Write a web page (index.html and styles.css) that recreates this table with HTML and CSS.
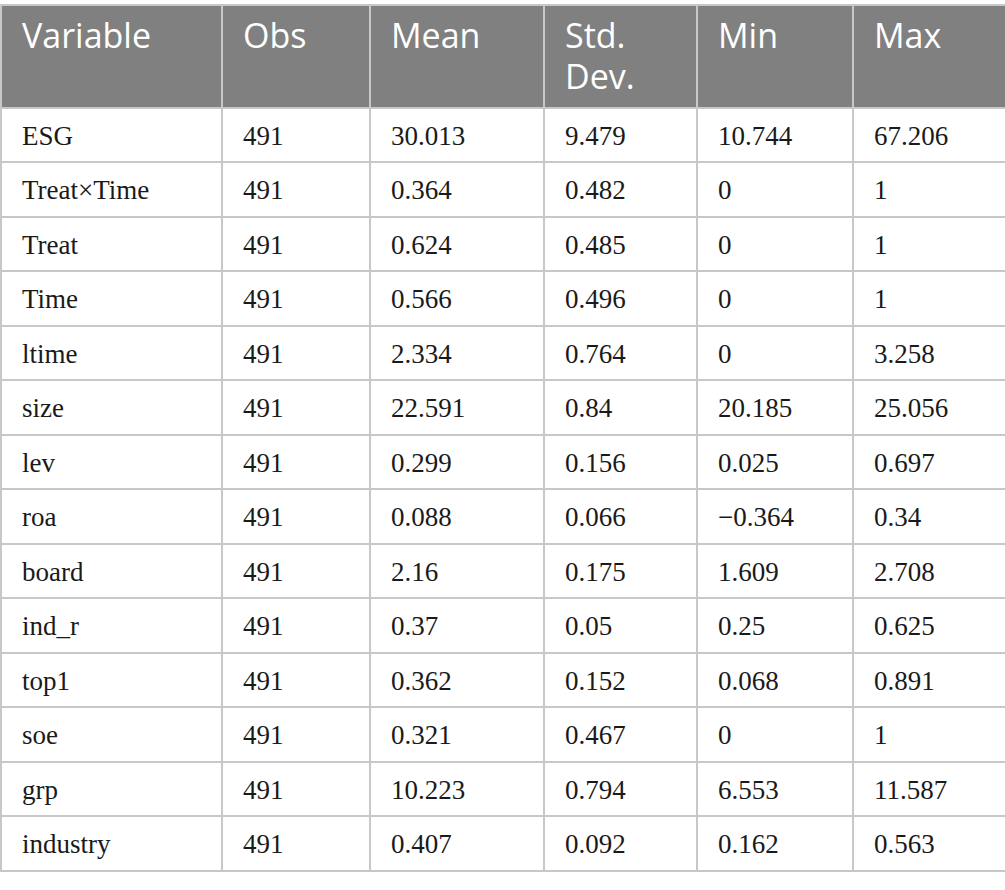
FILE: index.html
```html
<!DOCTYPE html>
<html lang="en">
<head>
<meta charset="utf-8">
<title>Descriptive statistics</title>
<link rel="stylesheet" href="styles.css">
</head>
<body>
<table class="stats">
  <colgroup>
    <col class="c1"><col class="c2"><col class="c3"><col class="c4"><col class="c5"><col class="c6">
  </colgroup>
  <thead>
    <tr><th>Variable</th><th>Obs</th><th>Mean</th><th>Std.<br>Dev.</th><th>Min</th><th>Max</th></tr>
  </thead>
  <tbody>
    <tr><td>ESG</td><td>491</td><td>30.013</td><td>9.479</td><td>10.744</td><td>67.206</td></tr>
    <tr><td>Treat×Time</td><td>491</td><td>0.364</td><td>0.482</td><td>0</td><td>1</td></tr>
    <tr><td>Treat</td><td>491</td><td>0.624</td><td>0.485</td><td>0</td><td>1</td></tr>
    <tr><td>Time</td><td>491</td><td>0.566</td><td>0.496</td><td>0</td><td>1</td></tr>
    <tr><td>ltime</td><td>491</td><td>2.334</td><td>0.764</td><td>0</td><td>3.258</td></tr>
    <tr><td>size</td><td>491</td><td>22.591</td><td>0.84</td><td>20.185</td><td>25.056</td></tr>
    <tr><td>lev</td><td>491</td><td>0.299</td><td>0.156</td><td>0.025</td><td>0.697</td></tr>
    <tr><td>roa</td><td>491</td><td>0.088</td><td>0.066</td><td>−0.364</td><td>0.34</td></tr>
    <tr><td>board</td><td>491</td><td>2.16</td><td>0.175</td><td>1.609</td><td>2.708</td></tr>
    <tr><td>ind_r</td><td>491</td><td>0.37</td><td>0.05</td><td>0.25</td><td>0.625</td></tr>
    <tr><td>top1</td><td>491</td><td>0.362</td><td>0.152</td><td>0.068</td><td>0.891</td></tr>
    <tr><td>soe</td><td>491</td><td>0.321</td><td>0.467</td><td>0</td><td>1</td></tr>
    <tr><td>grp</td><td>491</td><td>10.223</td><td>0.794</td><td>6.553</td><td>11.587</td></tr>
    <tr><td>industry</td><td>491</td><td>0.407</td><td>0.092</td><td>0.162</td><td>0.563</td></tr>
  </tbody>
</table>
</body>
</html>
```

FILE: styles.css
```css
html, body {
  margin: 0;
  padding: 0;
  background: #ffffff;
}

body {
  padding-top: 4px;
}

.stats {
  width: 1005px;
  border-collapse: collapse;
  table-layout: fixed;
}

.c1 { width: 221px; }
.c2 { width: 148px; }
.c3 { width: 174px; }
.c4 { width: 153px; }
.c5 { width: 156px; }
.c6 { width: 153px; }

.stats th,
.stats td {
  border: 2px solid #c8c8c8;
  text-align: left;
  vertical-align: top;
}

.stats th {
  background: #808080;
  color: #ffffff;
  font-family: "Open Sans", "Noto Sans", sans-serif;
  font-weight: 400;
  font-size: 34px;
  line-height: 41.7px;
  padding: 8.5px 18px 9px 20px;
}

.stats td {
  color: #1a1a1a;
  font-family: "Liberation Serif", "Times New Roman", serif;
  font-size: 27px;
  line-height: 30.5px;
  padding: 12px 18px 10px 20px;
  white-space: nowrap;
}
```
